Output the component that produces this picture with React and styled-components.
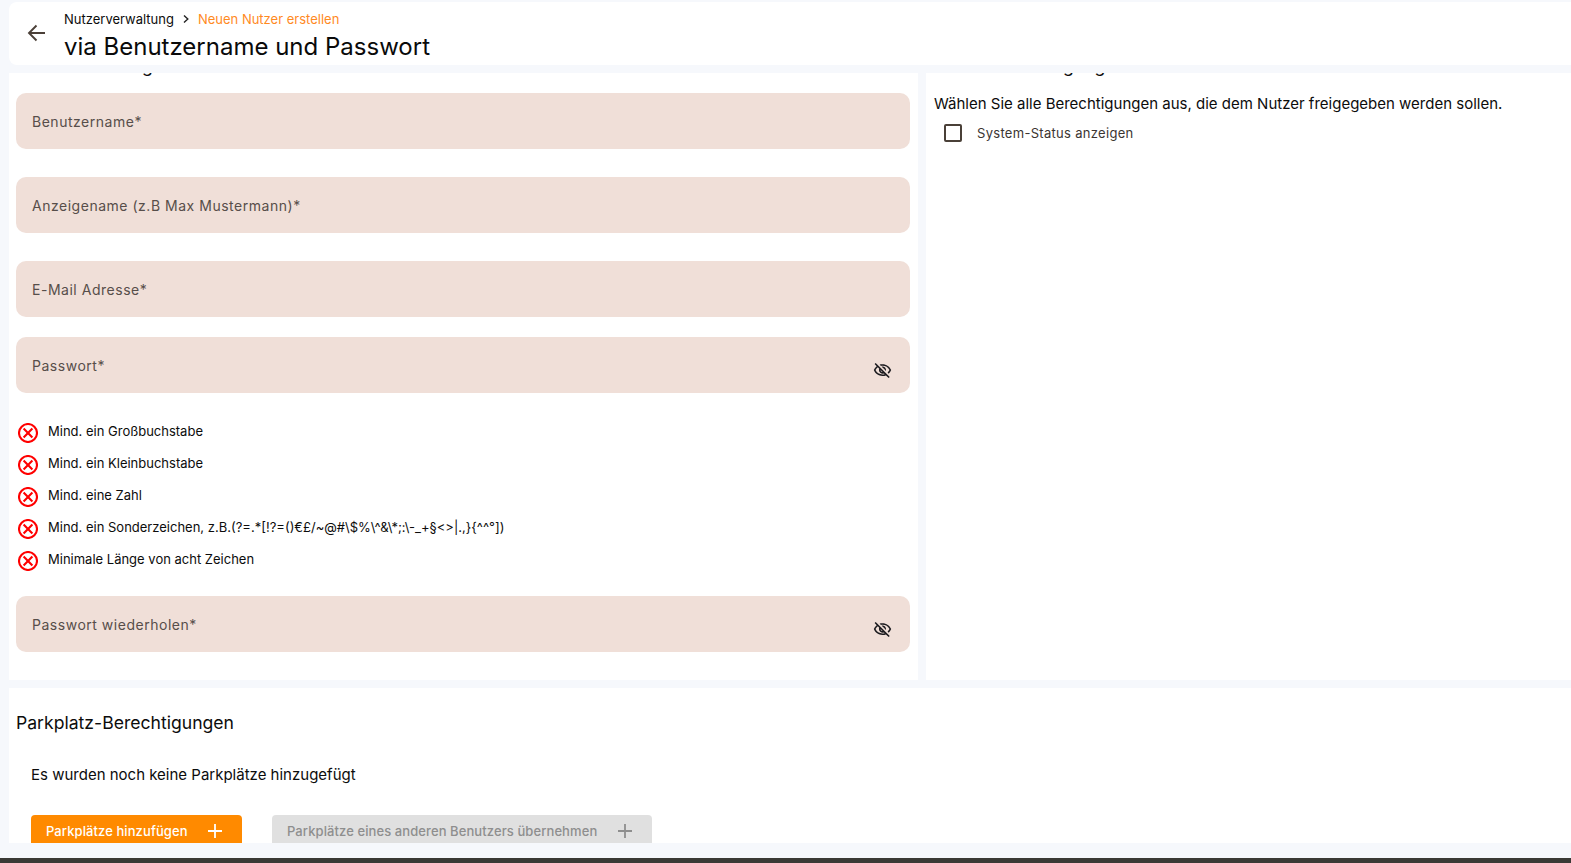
import React from "react";
import styled, { createGlobalStyle } from "styled-components";
import { MdOutlineVisibilityOff } from "react-icons/md";

const Global = createGlobalStyle`
  html, body { margin: 0; padding: 0; height: 100%; overflow: hidden; background: #f6f8fc; }
  body { font-family: Inter, "Noto Sans", sans-serif; color: #0c0c0c; }
  * { box-sizing: border-box; }
`;

const Page = styled.div`
  height: 863px; display: flex; flex-direction: column; padding: 2px 0 0 9px; overflow: hidden;
`;
const Header = styled.header`
  height: 63px; flex: none; background: #fff; border-radius: 8px 0 0 8px;
  display: flex; align-items: center; padding-left: 17px; gap: 16px; margin-bottom: 8px;
`;
const BackButton = styled.button`
  border: 0; background: none; padding: 0; width: 22px; height: 22px; color: #4b4038; display: flex; margin-top: -2px;
`;
const HeaderText = styled.div`display: flex; flex-direction: column; align-self: flex-start; margin-top: 8px;`;
const Crumbs = styled.div`display: flex; align-items: center; font-size: 13px; line-height: 18px; gap: 7px;`;
const CrumbCurrent = styled.span`color: #ff8a1f;`;
const Title = styled.h1`margin: 1px 0 0; font-size: 24px; line-height: 36px; font-weight: 400; color: #0a0a0a;`;

const Scroll = styled.main`height: 770px; flex: none; overflow: hidden; display: flex; flex-direction: column; gap: 8px;`;
const Columns = styled.div`height: 607px; flex: none; display: flex; gap: 8px;`;
const Panel = styled.section`
  background: #fff; overflow: hidden; padding: 0 7px; flex: ${p => (p.$wide ? "none" : 1)};
  width: ${p => (p.$wide ? "909px" : "auto")};
`;
const CutHeading = styled.h2`
  margin: -19px 0 15px; font-size: 17.6px; line-height: 24px; font-weight: 400; white-space: nowrap;
`;
const Field = styled.div`
  height: 56px; background: #f0dfd8; border-radius: 10px; padding: 0 16px; margin-right: 1px;
  display: flex; align-items: center; justify-content: space-between; margin-bottom: ${p => p.$gap}px;
  color: #574e4a; font-size: 14px; letter-spacing: 0.52px;
`;
const EyeIcon = styled(MdOutlineVisibilityOff)`
  font-size: 19px; color: #1c1b1f; margin: 11px 2px 0 0;
`;
const Rules = styled.ul`list-style: none; margin: 0 0 19px; padding: 24px 0 0;`;
const Rule = styled.li`
  height: 32px; display: flex; align-items: center; gap: 10px; padding-left: 2px; font-size: 13px; color: #0c0c0c;
`;
const RuleText = styled.span`margin-top: -5px;`;
const Intro = styled.p`margin: -1px 0 5px 1px; font-size: 15px; line-height: 24px; color: #0c0c0c;`;
const CheckRow = styled.label`
  display: flex; align-items: center; gap: 15px; padding-left: 11px; height: 24px;
  font-size: 13px; letter-spacing: 0.3px; color: #3c3532;
`;
const Box = styled.span`width: 18px; height: 18px; border: 2px solid #4a4038; border-radius: 2px; display: block;`;

const Lower = styled.section`
  flex: 1; background: #fff; padding: 23px 7px 0; overflow: hidden;
`;
const SectionTitle = styled.h2`margin: 0 0 28px; font-size: 17.6px; line-height: 24px; font-weight: 400;`;
const Empty = styled.p`margin: 0 0 28px 15px; font-size: 15px; line-height: 24px;`;
const Actions = styled.div`display: flex; gap: 30px; padding-left: 15px;`;
const ActionButton = styled.button`
  height: 31px; border: 0; border-radius: 4px; padding: 0 19px 0 15px; flex: none; white-space: nowrap;
  display: flex; align-items: center; justify-content: space-between;
  width: ${p => p.$width}px; font: 500 13px Inter, sans-serif; letter-spacing: 0.09px;
  background: ${p => (p.$muted ? "#e0e0e0" : "#ff8a00")};
  color: ${p => (p.$muted ? "#8e8e8e" : "#fff")};
`;
const BottomBar = styled.div`height: 5px; background: #3a3935; margin: 15px 0 0 -9px; flex: none;`;

const BackArrow = () => (
  <svg viewBox="0 0 22 22" width="22" height="22" fill="none" stroke="currentColor" strokeWidth="1.9">
    <path d="M19 11H3.5M10.5 3.5 3 11l7.5 7.5" />
  </svg>
);
const Chevron = () => (
  <svg viewBox="0 0 10 10" width="10" height="10" fill="none" stroke="#222" strokeWidth="1.4">
    <path d="M3 1.5 6.8 5 3 8.5" />
  </svg>
);
const RuleIcon = () => (
  <svg viewBox="0 0 20 20" width="20" height="20" fill="none" stroke="#ff0000" strokeWidth="2.1">
    <circle cx="10" cy="10" r="9" />
    <path d="m5.6 5.6 8.8 8.8M14.4 5.6l-8.8 8.8" />
  </svg>
);
const Plus = () => (
  <svg viewBox="0 0 16 16" width="16" height="16" fill="none" stroke="currentColor" strokeWidth="1.8">
    <path d="M8 1v14M1 8h14" />
  </svg>
);

const rules = [
  "Mind. ein Großbuchstabe",
  "Mind. ein Kleinbuchstabe",
  "Mind. eine Zahl",
  "Mind. ein Sonderzeichen, z.B.(?=.*[!?=()€£/~@#\\$%\\^&\\*;:\\-_+§<>|.,}{^^°])",
  "Minimale Länge von acht Zeichen",
];

export default function App() {
  return (
    <Page>
      <Global />
      <Header>
        <BackButton aria-label="Zurück"><BackArrow /></BackButton>
        <HeaderText>
          <Crumbs>
            <span>Nutzerverwaltung</span>
            <Chevron />
            <CrumbCurrent>Neuen Nutzer erstellen</CrumbCurrent>
          </Crumbs>
          <Title>via Benutzername und Passwort</Title>
        </HeaderText>
      </Header>
      <Scroll>
        <Columns>
          <Panel $wide>
            <CutHeading>Nutzer-Kennung</CutHeading>
            <Field $gap={28}>Benutzername*</Field>
            <Field $gap={28}>Anzeigename (z.B Max Mustermann)*</Field>
            <Field $gap={20}>E-Mail Adresse*</Field>
            <Field $gap={0}>
              Passwort*
              <EyeIcon />
            </Field>
            <Rules>
              {rules.map(r => (
                <Rule key={r}><RuleIcon /><RuleText>{r}</RuleText></Rule>
              ))}
            </Rules>
            <Field $gap={0}>
              Passwort wiederholen*
              <EyeIcon />
            </Field>
          </Panel>
          <Panel>
            <CutHeading>Admin-Berechtigungen</CutHeading>
            <Intro>Wählen Sie alle Berechtigungen aus, die dem Nutzer freigegeben werden sollen.</Intro>
            <CheckRow><Box />System-Status anzeigen</CheckRow>
          </Panel>
        </Columns>
        <Lower>
          <SectionTitle>Parkplatz-Berechtigungen</SectionTitle>
          <Empty>Es wurden noch keine Parkplätze hinzugefügt</Empty>
          <Actions>
            <ActionButton $width={211}>Parkplätze hinzufügen<Plus /></ActionButton>
            <ActionButton $muted $width={380}>Parkplätze eines anderen Benutzers übernehmen<Plus /></ActionButton>
          </Actions>
        </Lower>
      </Scroll>
      <BottomBar />
    </Page>
  );
}
